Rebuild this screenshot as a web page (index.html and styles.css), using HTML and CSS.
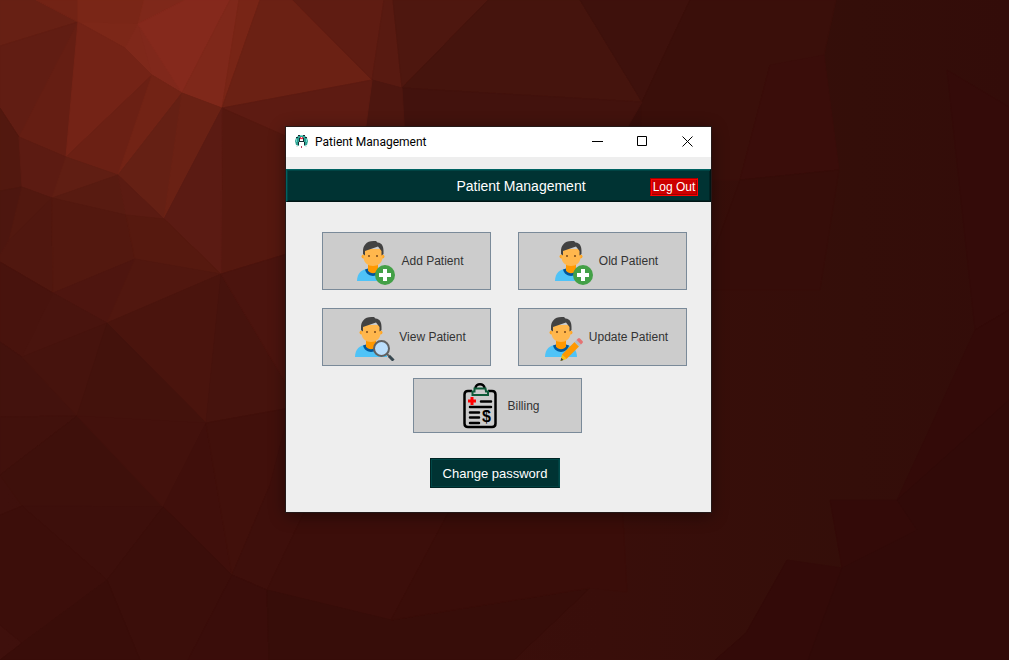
FILE: index.html
```html
<!DOCTYPE html>
<html lang="en">
<head>
<meta charset="utf-8">
<title>Patient Management</title>
<link rel="stylesheet" href="styles.css">
</head>
<body>
<svg class="wallpaper" viewBox="0 0 1009 660" preserveAspectRatio="xMidYMid slice" aria-hidden="true">
  <defs>
    <linearGradient id="base" x1="0" y1="0" x2="1" y2="0">
      <stop offset="0" stop-color="#3f100c"/>
      <stop offset="0.6" stop-color="#390e0a"/>
      <stop offset="0.85" stop-color="#340e09"/>
      <stop offset="1" stop-color="#330c09"/>
    </linearGradient>
  </defs>
  <rect width="1009" height="660" fill="url(#base)"/>
  <g class="facets">
    <polygon color="#672014" points="0,0 36,0 78,22 0,46"/>
    <polygon color="#722315" points="36,0 78,0 78,22"/>
    <polygon color="#611d13" points="0,46 78,22 19,137 0,108"/>
    <polygon color="#651e13" points="78,22 66,157 19,137"/>
    <polygon color="#7a2617" points="78,0 144,0 138,24 78,22"/>
    <polygon color="#7c2718" points="78,22 138,24 125,48"/>
    <polygon color="#7f281a" points="144,0 185,0 138,24"/>
    <polygon color="#7f281a" points="138,24 152,75 125,48"/>
    <polygon color="#80281b" points="138,24 182,93 152,75"/>
    <polygon color="#85291c" points="185,0 230,0 182,93 138,24"/>
    <polygon color="#7f281a" points="230,0 239,0 222,108 182,93"/>
    <polygon color="#782516" points="239,0 260,0 222,108"/>
    <polygon color="#742316" points="78,22 125,48 152,75 66,157"/>
    <polygon color="#6b2014" points="152,75 118,175 66,157"/>
    <polygon color="#722315" points="152,75 182,93 118,175"/>
    <polygon color="#652014" points="182,93 164,219 118,175"/>
    <polygon color="#6a2114" points="182,93 222,108 164,219"/>
    <polygon color="#6b2114" points="260,0 293,0 372,80 222,108"/>
    <polygon color="#5f1c12" points="293,0 384,0 372,80"/>
    <polygon color="#581a11" points="384,0 393,0 402,88 372,80"/>
    <polygon color="#4e170f" points="393,0 488,0 402,88"/>
    <polygon color="#45140d" points="488,0 580,0 642,102 402,88"/>
    <polygon color="#3e110c" points="580,0 690,0 642,102"/>
    <polygon color="#3a0f0a" points="690,0 836,0 824,55 770,65 740,180 640,180 642,102"/>
    <polygon color="#42120d" points="402,88 642,102 620,140 400,140"/>
    <polygon color="#4d160f" points="372,80 402,88 405,140 360,140"/>
    <polygon color="#5d1b12" points="222,108 372,80 360,170 290,170"/>
    <polygon color="#55180f" points="222,108 290,138 290,253 221,274"/>
    <polygon color="#5b1b13" points="222,108 221,274 164,219"/>
    <polygon color="#52180f" points="0,108 19,137 22,187 0,191"/>
    <polygon color="#5c1b12" points="19,137 66,157 52,198 22,187"/>
    <polygon color="#601e13" points="66,157 118,175 52,198"/>
    <polygon color="#581b11" points="52,198 118,175 126,215"/>
    <polygon color="#5b1b12" points="118,175 164,219 126,215"/>
    <polygon color="#4d160f" points="0,191 22,187 9,240 0,258"/>
    <polygon color="#52180f" points="22,187 52,198 9,240"/>
    <polygon color="#50170f" points="9,240 52,198 53,293 0,262 0,255"/>
    <polygon color="#53180f" points="52,198 126,215 135,259 53,293"/>
    <polygon color="#56190f" points="126,215 164,219 221,274 135,259"/>
    <polygon color="#4e150f" points="53,293 135,259 107,323"/>
    <polygon color="#51170f" points="135,259 221,274 107,323"/>
    <polygon color="#48130d" points="0,262 53,293 22,357 0,342"/>
    <polygon color="#49140e" points="53,293 107,323 22,357"/>
    <polygon color="#4a140d" points="107,323 221,274 206,423"/>
    <polygon color="#46130d" points="221,274 290,390 290,408 206,423"/>
    <polygon color="#4b140e" points="221,274 290,253 290,390"/>
    <polygon color="#43120d" points="0,342 22,357 77,416 0,417"/>
    <polygon color="#46130d" points="22,357 107,323 77,416"/>
    <polygon color="#43120c" points="107,323 206,423 77,416"/>
    <polygon color="#41110c" points="0,417 77,416 0,475"/>
    <polygon color="#3e100b" points="77,416 163,507 22,506 0,475"/>
    <polygon color="#43110c" points="77,416 206,423 163,507"/>
    <polygon color="#400f0b" points="206,423 232,575 163,507"/>
    <polygon color="#41100b" points="206,423 290,408 270,485 232,575"/>
    <polygon color="#3e0f0b" points="290,408 310,500 267,590 232,575 270,485"/>
    <polygon color="#3d0f0b" points="22,506 163,507 107,580"/>
    <polygon color="#3b0e0a" points="163,507 232,575 188,660 140,660 107,580"/>
    <polygon color="#3c0e0a" points="0,515 22,506 107,580 22,643 0,625"/>
    <polygon color="#390d09" points="107,580 140,660 0,660 22,643"/>
    <polygon color="#3a0d0a" points="232,575 267,590 269,660 188,660"/>
    <polygon color="#3c0e0a" points="310,500 455,500 391,620 267,590"/>
    <polygon color="#370d09" points="267,590 391,620 590,588 514,660 269,660"/>
    <polygon color="#3a0d09" points="455,500 622,500 627,592 590,588 391,620"/>
    <polygon color="#3a0d0a" points="770,65 824,55 839,170 740,180"/>
    <polygon color="#360d09" points="740,180 839,170 820,290 700,290"/>
    <polygon color="#340b09" points="947,70 1009,107 1009,310 975,330"/>
    <polygon color="#330a08" points="975,330 1009,310 1009,660 715,660 746,633 787,560 842,568 830,500 897,500"/>
    <polygon color="#310a08" points="1009,400 1009,660 808,660 842,568 917,530 897,500"/>
  </g>
</svg>

<svg class="symbols" aria-hidden="true">
  <symbol id="person" viewBox="0 0 48 48">
    <path fill="#4fc3f7" d="M8 44c0-8 5-12 11-12h10c7 0 11 5 11 12z"/>
    <path fill="#01579b" d="M16 32.500c2 8.500 14 8.500 16 0l-3-1h-10z"/>
    <path fill="#ff9800" d="M19 26h10v7.500c-2 3.500-8 3.500-10 0z"/>
    <circle fill="#ffa726" cx="14.500" cy="19.500" r="2"/>
    <circle fill="#ffa726" cx="33.500" cy="19.500" r="2"/>
    <path fill="#ffb74d" d="M14.500 12h19v8c0 12-19 12-19 0z"/>
    <path fill="#424242" d="M24.500 4C17 4 14 9 14 14v3l2 1.500V14l13-4.500 3.500 4.500v4.500l2-1.500v-3c0-4-1-8-6-8.500L27 4z"/>
    <circle fill="#784719" cx="20" cy="19" r="1"/>
    <circle fill="#784719" cx="28" cy="19" r="1"/>
  </symbol>
  <symbol id="person-add" viewBox="0 0 48 48">
    <use href="#person"/>
    <circle fill="#43a047" cx="36" cy="38" r="10"/>
    <path fill="#fff" d="M34 32h4v4h4v4h-4v4h-4v-4h-4v-4h4z"/>
  </symbol>
</svg>

<main class="window">
  <header class="titlebar">
    <svg class="app-icon" viewBox="0 0 13 13" aria-hidden="true">
      <path fill="#2fa393" d="M3 1h7l2 2 1 3-1 4-3 1V5H4v6L1 10 0 6l1-3z"/>
      <path fill="#6fd6ca" d="M1 4h1v3H1zM11 4h1v3h-1zM5 0h3v1H5z"/>
      <path fill="#172b34" d="M3 0h2v1H3zM8 0h2v1H8zM1 2h2v1H1zM10 2h2v1h-2zM4 3h1v3h3V3h1v4h1v3H9V7H4v3H3V7h1z"/>
      <path fill="#e8324c" d="M5 2h3v3H5z"/>
      <path fill="#ffe3e3" d="M6 2h1v1H6zM5 4h3v1H5z"/>
      <path fill="#fff" d="M5 7h3v3h1v1H4v-1h1z"/>
      <path fill="#e4e8e8" d="M1 11h2v1H1zM10 11h2v1h-2z"/>
      <path fill="#b7405c" d="M6 11h1v2H6z"/>
    </svg>
    <span class="caption">Patient Management</span>
    <button class="control" type="button" aria-label="Minimize"><svg viewBox="0 0 11 11"><path d="M0 5.500h11"/></svg></button>
    <button class="control" type="button" aria-label="Maximize"><svg viewBox="0 0 11 11"><path d="M.5.500h9v9h-9z"/></svg></button>
    <button class="control" type="button" aria-label="Close"><svg viewBox="0 0 11 11"><path d="M.5.500l10 10M10.500.500l-10 10"/></svg></button>
  </header>

  <div class="banner">
    <h1 class="heading">Patient Management</h1>
    <button class="logout" type="button">Log Out</button>
  </div>

  <div class="actions">
    <button class="tile" type="button">
      <svg class="tile-icon" viewBox="0 0 48 48" aria-hidden="true"><use href="#person-add"/></svg>Add Patient
    </button>
    <button class="tile" type="button">
      <svg class="tile-icon" viewBox="0 0 48 48" aria-hidden="true"><use href="#person-add"/></svg>Old Patient
    </button>
    <button class="tile" type="button">
      <svg class="tile-icon" viewBox="0 0 48 48" aria-hidden="true">
        <use href="#person"/>
        <path stroke="#616161" stroke-width="2" d="M40 41l3 3"/>
        <path stroke="#37474f" stroke-width="3" d="M42 43l4.500 4.500"/>
        <circle fill="#bbdefb" stroke="#616161" stroke-width="2" cx="34.500" cy="35.500" r="7.500"/>
      </svg>View Patient
    </button>
    <button class="tile" type="button">
      <svg class="tile-icon" viewBox="0 0 48 48" aria-hidden="true">
        <use href="#person"/>
        <path fill="#ff9800" d="M37.500 29l4.500 4.500L29.500 46 25 41.500z"/>
        <path fill="#b0bec5" d="M37.500 29l2-2 4.500 4.500-2 2z"/>
        <path fill="#e57373" d="M39.500 27l1.500-1.500q1-1 2 0l2.500 2.500q1 1 0 2L44 31.500z"/>
        <path fill="#ffc107" d="M25 41.500L23.500 48l6-2z"/>
        <path fill="#37474f" d="M24.300 44.800L23.500 48l3-1z"/>
      </svg>Update Patient
    </button>
  </div>

  <div class="row billing-row">
    <button class="tile tile-low" type="button">
      <svg class="tile-icon" viewBox="0 0 48 48" aria-hidden="true">
        <path fill="none" stroke="#000" stroke-width="2.500" d="M20.500 6c0-5 9-5 9 0"/>
        <path fill="none" stroke="#000" stroke-width="2.500" d="M17 9h-4q-3.500 0-3.500 3.500v29q0 3.500 3.500 3.500h24q3.500 0 3.500-3.500v-29Q40.500 9 37 9h-4"/>
        <path fill="none" stroke="#0e5a38" stroke-width="2" d="M19.500 6.500h11l.5 3h2V13H17.500V9.500h2z"/>
        <path fill="#f00" d="M15.500 15h3v2.500H21v3h-2.500V23h-3v-2.500H13v-3h2.500z"/>
        <path fill="none" stroke="#000" stroke-width="2.500" stroke-linecap="round" d="M26 19.500h10M15 25h21M15 30.500h9M15 35.500h9M15 41h9"/>
        <text class="dollar" x="31.500" y="39.500" text-anchor="middle">$</text>
      </svg>Billing
    </button>
  </div>
  <div class="row password-row">
    <button class="password" type="button">Change password</button>
  </div>
</main>
</body>
</html>
```

FILE: styles.css
```css
* {
  box-sizing: border-box;
}

body {
  margin: 0;
  min-height: 100vh;
  overflow: hidden;
  background: #3a0e0a;
  font-family: "Liberation Sans", Arial, sans-serif;
  font-size: 12px;
  color: #333;
}

button {
  margin: 0;
  padding: 0;
  font: inherit;
  color: inherit;
  cursor: pointer;
}

.wallpaper {
  position: absolute;
  width: 100%;
  height: 100vh;
}

.facets polygon {
  fill: currentColor;
  stroke: currentColor;
  stroke-width: 1px;
}

.symbols {
  position: absolute;
  width: 0;
  height: 0;
}

.window {
  position: absolute;
  left: 286px;
  top: 127px;
  width: 425px;
  padding-bottom: 24px;
  background: #eee;
  box-shadow: 0 0 0 1px rgba(35, 28, 28, 0.85), 0 3px 16px rgba(0, 0, 0, 0.45);
}

.titlebar {
  display: flex;
  align-items: center;
  height: 30px;
  padding: 0 1px 2px 9px;
  background: #fff;
}

.app-icon {
  width: 13px;
  height: 13px;
}

.caption {
  flex: 1;
  margin-left: 7px;
  padding-top: 2px;
  font-family: Roboto, "Open Sans", sans-serif;
  color: #000;
}

.control {
  display: flex;
  align-items: center;
  justify-content: center;
  width: 45px;
  height: 28px;
  border: 0;
  background: transparent;
}

.control svg {
  width: 11px;
  height: 11px;
  fill: none;
  stroke: #000;
}

.banner {
  display: grid;
  grid-template-columns: 1fr auto 1fr;
  align-items: center;
  height: 33px;
  margin-top: 12px;
  padding: 0 12px;
  border: 1px solid;
  border-color: #006262 #001515 #001515 #006262;
  background: #033;
  box-shadow: inset 1px 1px #004545, inset -1px -1px #002424;
}

.heading {
  grid-column: 2;
  margin: 0 0 0 45px;
  font-size: 14px;
  font-weight: 400;
  color: #fff;
}

.logout {
  justify-self: end;
  width: 48px;
  height: 18px;
  margin-top: 2px;
  border: 1px solid;
  border-color: #a00000 #f00 #f00 #a00000;
  background: #c00;
  box-shadow: inset 1px 1px #f00, inset -1px -1px #a00000;
  color: #fff;
}

.actions {
  display: grid;
  grid-template-columns: 1fr 1fr;
  gap: 18px 27px;
  padding: 30px 24px 0 36px;
}

.tile {
  display: flex;
  align-items: center;
  justify-content: center;
  gap: 4px;
  height: 58px;
  border: 1px solid #7a8a99;
  background: #ccc;
}

.tile-icon {
  flex: none;
  width: 48px;
  height: 48px;
}

.dollar {
  font-size: 16px;
  font-weight: 700;
  fill: #000;
}

.row {
  display: flex;
  justify-content: center;
}

.billing-row {
  padding: 12px 2px 0 0;
}

.password-row {
  padding: 25px 7px 0 0;
}

.tile-low {
  width: 169px;
  height: 55px;
}

.password {
  width: 130px;
  height: 30px;
  border: 1px solid;
  border-color: #002424 #004a4a #002424 #002424;
  background: #033;
  box-shadow: inset 1px 1px #004747, inset -1px -1px #004040;
  font-size: 13px;
  color: #fff;
}
```
